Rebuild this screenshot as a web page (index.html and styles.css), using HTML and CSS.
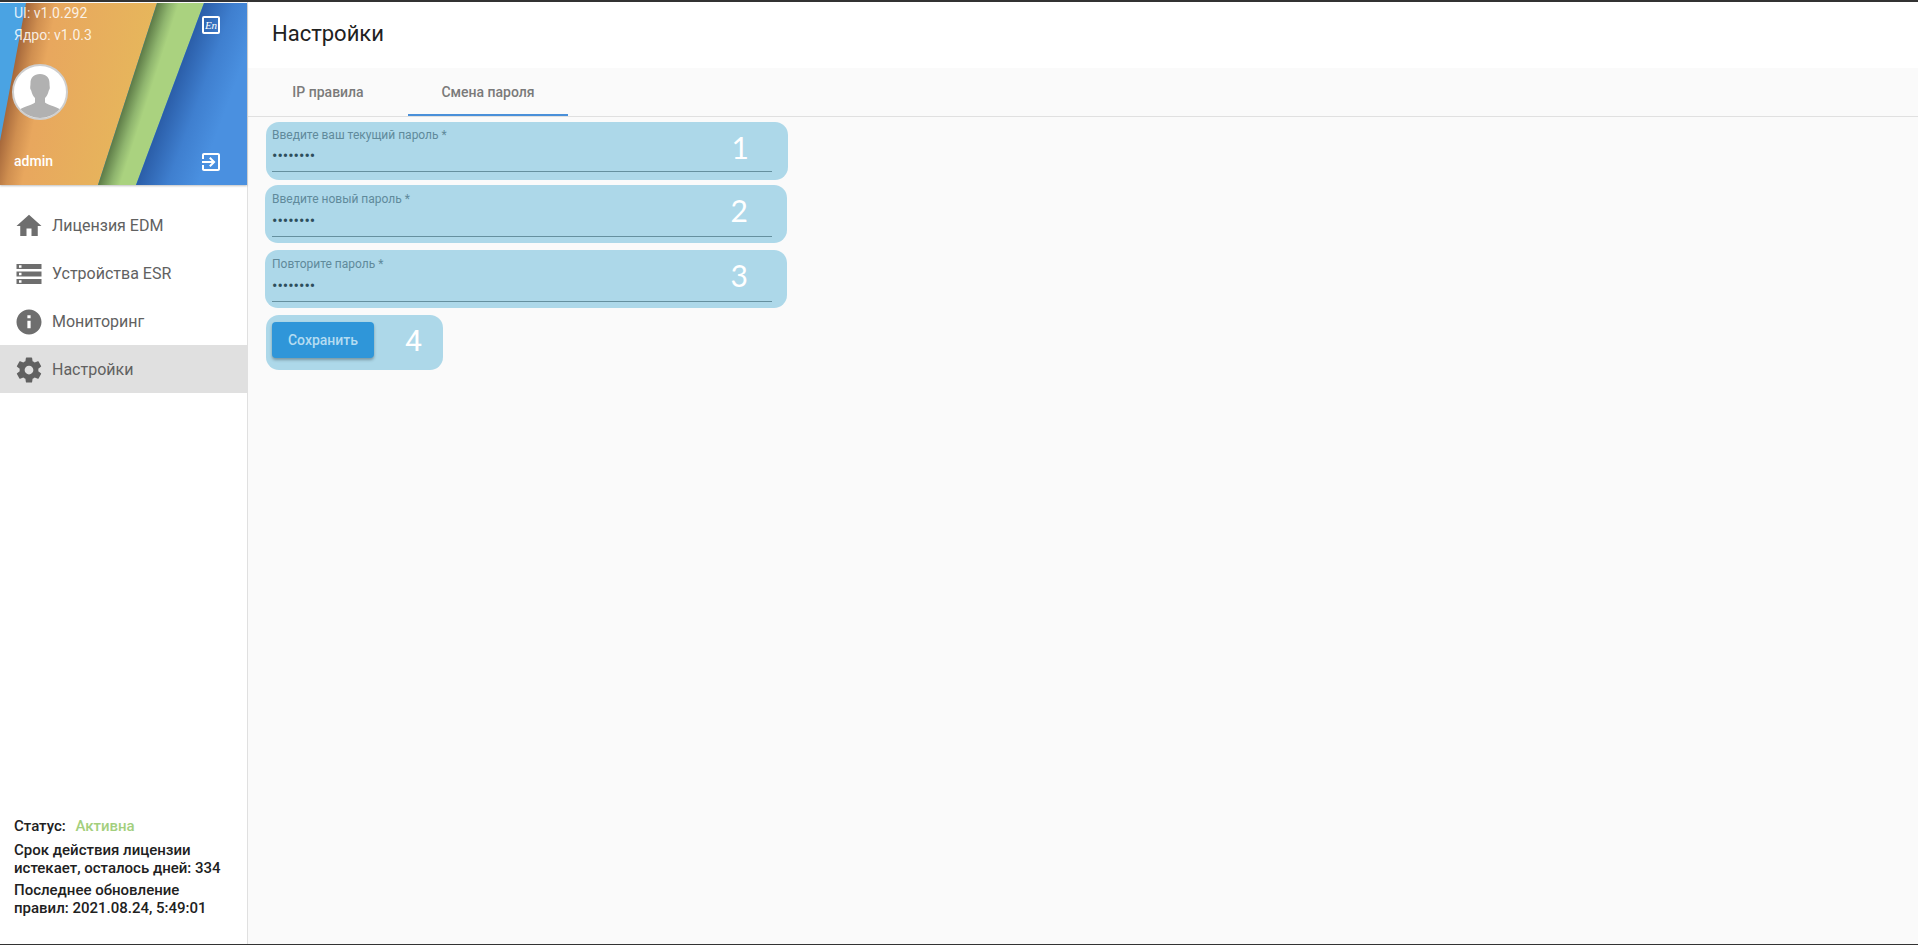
FILE: index.html
```html
<!DOCTYPE html>
<html lang="ru">
<head>
<meta charset="utf-8">
<title>Настройки</title>
<link rel="stylesheet" href="styles.css">
</head>
<body>
<div class="frame">
  <aside class="sidebar">
    <div class="banner">
      <svg class="banner-art" viewBox="0 0 247 182" width="247" height="182" aria-hidden="true">
        <defs>
          <linearGradient id="orange" gradientUnits="userSpaceOnUse" x1="26" y1="0" x2="176" y2="29">
            <stop offset="0" stop-color="#a4663a"/>
            <stop offset="0.1" stop-color="#d08f50"/>
            <stop offset="0.2" stop-color="#e8a75e"/>
            <stop offset="1" stop-color="#e6ba5b"/>
          </linearGradient>
          <linearGradient id="green" gradientUnits="userSpaceOnUse" x1="157" y1="0" x2="197" y2="13">
            <stop offset="0" stop-color="#5c7a46"/>
            <stop offset="0.3" stop-color="#8fb56e"/>
            <stop offset="0.5" stop-color="#aad27f"/>
            <stop offset="1" stop-color="#aad27f"/>
          </linearGradient>
          <linearGradient id="blue" gradientUnits="userSpaceOnUse" x1="204" y1="0" x2="258" y2="20">
            <stop offset="0" stop-color="#2b5ea9"/>
            <stop offset="0.5" stop-color="#3f7fcf"/>
            <stop offset="1" stop-color="#4a90e0"/>
          </linearGradient>
        </defs>
        <rect width="247" height="182" fill="#4aa3e3"/>
        <polygon points="26,0 157,0 98,182 0,182 0,138" fill="url(#orange)"/>
        <polygon points="157,0 204,0 136,182 98,182" fill="url(#green)"/>
        <polygon points="204,0 247,0 247,182 136,182" fill="url(#blue)"/>
      </svg>
      <div class="banner-row">
        <div class="versions">
          <div>UI: v1.0.292</div>
          <div>Ядро: v1.0.3</div>
        </div>
        <span class="lang-icon">En</span>
      </div>
      <div class="avatar">
        <svg viewBox="0 0 52 52" width="52" height="52" aria-hidden="true">
          <path fill="#b1b1b1" d="M26 8c-6 0-9.500 3.500-9.500 9 0 2-.3 3.500-.3 5 0 1 .6 1.800 1 2.500.6 3.300 2.300 6 3.800 7.500v4.500c-1.500 1.500-5 2.700-9 4-3.500 1.100-6 2.500-8 4.500a25 25 0 0 0 44 0c-2-2-4.500-3.400-8-4.500-4-1.300-7.500-2.500-9-4V32c1.500-1.500 3.200-4.200 3.800-7.500.4-.7 1-1.500 1-2.500 0-1.500-.3-3-.3-5 0-5.500-3.500-9-9.500-9z"/>
        </svg>
      </div>
      <div class="banner-row banner-bottom">
        <span class="username">admin</span>
        <svg class="logout" viewBox="0 0 24 24" width="24" height="24" aria-hidden="true">
          <path fill="#fff" d="M10.090 15.590L11.500 17l5-5-5-5-1.410 1.410L12.670 11H3v2h9.670l-2.580 2.590zM19 3H5c-1.110 0-2 .9-2 2v4h2V5h14v14H5v-4H3v4c0 1.100.89 2 2 2h14c1.100 0 2-.9 2-2V5c0-1.100-.9-2-2-2z"/>
        </svg>
      </div>
    </div>

    <nav class="nav">
      <a class="nav-item">
        <svg viewBox="0 0 24 24" width="30" height="30" aria-hidden="true"><path d="M10 20v-6h4v6h5v-8h3L12 3 2 12h3v8z"/></svg>
        <span>Лицензия EDM</span>
      </a>
      <a class="nav-item">
        <svg viewBox="0 0 24 24" width="30" height="30" aria-hidden="true"><path d="M2 20h20v-4H2v4zm2-3h2v2H4v-2zM2 4v4h20V4H2zm4 3H4V5h2v2zm-4 7h20v-4H2v4zm2-3h2v2H4v-2z"/></svg>
        <span>Устройства ESR</span>
      </a>
      <a class="nav-item">
        <svg viewBox="0 0 24 24" width="30" height="30" aria-hidden="true"><path d="M12 2C6.480 2 2 6.480 2 12s4.480 10 10 10 10-4.480 10-10S17.520 2 12 2zm1.300 15h-2.600v-6h2.600v6zm0-8h-2.600V6.500h2.600V9z"/></svg>
        <span>Мониторинг</span>
      </a>
      <a class="nav-item nav-item-active">
        <svg viewBox="0 0 24 24" width="30" height="30" aria-hidden="true"><path d="M19.430 12.980c.04-.32.07-.64.07-.98s-.03-.66-.07-.98l2.110-1.650c.19-.15.24-.42.12-.64l-2-3.460c-.12-.22-.39-.3-.61-.22l-2.490 1c-.52-.4-1.080-.73-1.690-.98l-.38-2.650C14.460 2.180 14.250 2 14 2h-4c-.25 0-.46.18-.49.42l-.38 2.650c-.61.25-1.170.59-1.690.98l-2.490-1c-.23-.09-.49 0-.61.22l-2 3.460c-.13.22-.07.49.12.64l2.110 1.650c-.04.32-.07.65-.07.98s.03.66.07.98l-2.110 1.650c-.19.15-.24.42-.12.64l2 3.460c.12.22.39.3.61.22l2.490-1c.52.4 1.080.73 1.690.98l.38 2.650c.03.24.24.42.49.42h4c.25 0 .46-.18.49-.42l.38-2.650c.61-.25 1.170-.59 1.690-.98l2.490 1c.23.09.49 0 .61-.22l2-3.460c.12-.22.07-.49-.12-.64l-2.110-1.650zM12 15.500c-1.930 0-3.500-1.570-3.500-3.500s1.570-3.500 3.500-3.500 3.500 1.570 3.500 3.500-1.570 3.500-3.500 3.500z"/></svg>
        <span>Настройки</span>
      </a>
    </nav>

    <div class="status">
      <p class="status-line">Статус: <span class="status-active">Активна</span></p>
      <p class="status-term">Срок действия лицензии истекает, осталось дней: 334</p>
      <p>Последнее обновление правил: 2021.08.24, 5:49:01</p>
    </div>
  </aside>

  <main class="main">
    <header class="header"><h1>Настройки</h1></header>
    <div class="tabs">
      <div class="tab">IP правила</div>
      <div class="tab tab-active">Смена пароля</div>
    </div>
    <form class="form">
      <div class="callout callout-first">
        <label class="field">
          <span class="field-label">Введите ваш текущий пароль *</span>
          <input class="field-input" type="password" value="12345678" readonly>
        </label>
        <span class="marker">1</span>
      </div>
      <div class="callout">
        <label class="field">
          <span class="field-label">Введите новый пароль *</span>
          <input class="field-input" type="password" value="12345678" readonly>
        </label>
        <span class="marker">2</span>
      </div>
      <div class="callout">
        <label class="field">
          <span class="field-label">Повторите пароль *</span>
          <input class="field-input" type="password" value="12345678" readonly>
        </label>
        <span class="marker">3</span>
      </div>
      <div class="callout callout-button">
        <button class="save" type="button">Сохранить</button>
        <span class="marker marker-button">4</span>
      </div>
    </form>
  </main>
</div>
</body>
</html>
```
FILE: styles.css
```css
* { box-sizing: border-box; }
html, body { margin: 0; height: 100%; }
body {
  font-family: Roboto, "Liberation Sans", sans-serif;
  background: #fafafa;
  overflow: hidden;
}
.frame {
  display: flex;
  height: 945px;
  border-top: 2px solid #333;
  border-bottom: 1px solid #333;
}

/* Sidebar */
.sidebar {
  width: 248px;
  flex: none;
  display: flex;
  flex-direction: column;
  background: #fff;
  border-right: 1px solid #e0e0e0;
  padding-top: 1px;
}
.banner {
  position: relative;
  height: 182px;
  flex: none;
  display: flex;
  flex-direction: column;
  padding: 0 14px;
  color: #fff;
  box-shadow: 0 1px 2px rgba(0, 0, 0, .25);
}
.banner-art { position: absolute; left: 0; top: 0; }
.banner-row {
  position: relative;
  display: flex;
  justify-content: space-between;
  align-items: flex-start;
}
.versions {
  font-size: 14px;
  line-height: 22px;
  color: rgba(255, 255, 255, .85);
  margin-top: -1px;
}
.lang-icon {
  width: 18px;
  height: 18px;
  margin: 13px 13px 0 0;
  border: 2px solid #fff;
  border-radius: 2px;
  font: italic 11px/14px "Liberation Serif", serif;
  text-align: center;
  overflow: hidden;
  white-space: nowrap;
}
.avatar {
  position: relative;
  width: 56px;
  height: 56px;
  margin: 18px 0 0 -2px;
  border: 2px solid #cfcfcf;
  border-radius: 50%;
  background: #fff;
  overflow: hidden;
}
.banner-bottom { margin-top: auto; align-items: center; height: 24px; margin-bottom: 11px; }
.username { font-size: 14px; font-weight: 500; margin-top: -2px; }
.logout { margin-right: 10px; }

.nav { padding-top: 16px; }
.nav-item {
  display: flex;
  align-items: center;
  gap: 8px;
  height: 48px;
  padding-left: 14px;
  font-size: 16px;
  color: #616161;
}
.nav-item svg { fill: #6e6e6e; flex: none; margin-top: 2px; }
.nav-item-active { background: #e0e0e0; }
.nav-item-active svg { fill: #616161; }

.status {
  margin-top: auto;
  padding: 0 14px 27px;
  font-size: 15px;
  font-weight: 500;
  line-height: 18px;
  color: #212121;
}
.status p { margin: 5px 0 0; }
.status .status-term { margin: 6px 0 -1px; }
.status-line { margin-bottom: 5px; }
.status-active { color: #a3cf7d; margin-left: 6px; }

/* Main */
.main { flex: 1; min-width: 0; display: flex; flex-direction: column; }
.header {
  height: 66px;
  flex: none;
  display: flex;
  align-items: center;
  padding: 0 0 3px 24px;
  background: #fff;
}
.header h1 { margin: 0; font-size: 22px; font-weight: 400; color: #212121; }
.tabs {
  display: flex;
  height: 49px;
  flex: none;
  border-bottom: 1px solid #e0e0e0;
}
.tab {
  width: 160px;
  height: 48px;
  display: flex;
  align-items: center;
  justify-content: center;
  font-size: 14px;
  font-weight: 500;
  color: #7a7a7a;
}
.tab-active { border-bottom: 2px solid #4a90d9; padding-top: 2px; }

.form {
  display: flex;
  flex-direction: column;
  align-items: flex-start;
  gap: 7px;
  padding: 5px 0 0 17px;
}
.callout {
  position: relative;
  width: 522px;
  height: 58px;
  padding: 0 15px 0 7px;
  border-radius: 13px;
  background: #add8e9;
}
.callout-first { margin: 0 0 -2px 1px; padding-left: 6px; padding-right: 16px; }
.callout-button {
  width: 177px;
  height: 55px;
  margin-left: 1px;
  padding: 7px 6px;
}
.field {
  display: flex;
  flex-direction: column;
  height: 52px;
  border-bottom: 1px solid #65909f;
}
.callout-first .field { height: 50px; }
.field-label {
  margin-top: 7px;
  font-size: 12px;
  line-height: 14px;
  color: #608a9b;
}
.callout-first .field-label { margin-top: 6px; }
.field-input {
  width: 100%;
  height: 28px;
  padding: 0;
  border: 0;
  outline: 0;
  background: transparent;
  font: 16px Roboto, sans-serif;
  color: #2d4e5c;
}
.callout-first .field-input { height: 27px; }
.marker {
  position: absolute;
  right: 39px;
  top: 7px;
  font: 30px/36px Lato, sans-serif;
  color: #fff;
}
.marker-button { left: 139px; right: auto; top: 8px; font-family: Roboto, sans-serif; }
.save {
  width: 102px;
  height: 36px;
  border: 0;
  border-radius: 4px;
  background: #2f96d9;
  box-shadow: 0 2px 3px rgba(0, 0, 0, .3);
  font: 500 14px Roboto, sans-serif;
  color: #b4dcf1;
}
```
